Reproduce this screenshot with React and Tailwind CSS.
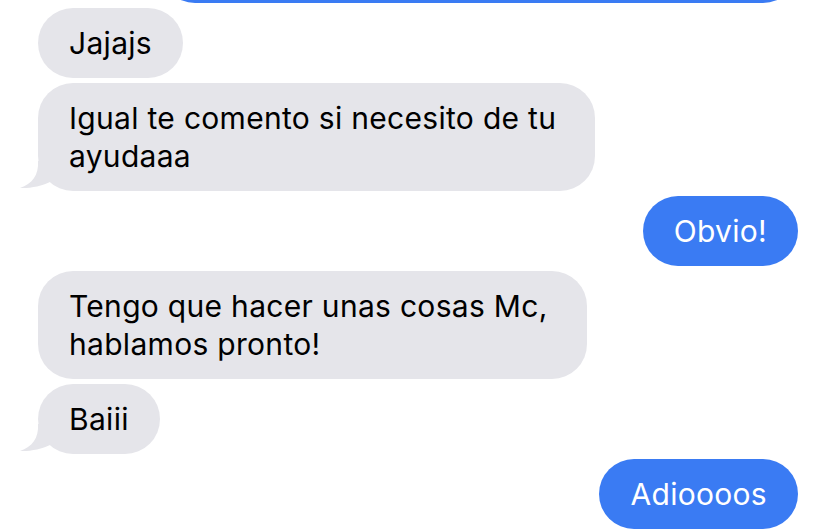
const messages = [
  { id: 1, from: "them", lines: ["Jajajs"] },
  { id: 2, from: "them", lines: ["Igual te comento si necesito de tu", "ayudaaa"], tail: true },
  { id: 3, from: "me", lines: ["Obvio!"] },
  { id: 4, from: "them", lines: ["Tengo que hacer unas cosas Mc,", "hablamos pronto!"] },
  { id: 5, from: "them", lines: ["Baiii"], tail: true },
  { id: 6, from: "me", lines: ["Adioooos"] },
];

function Tail() {
  return (
    <svg className="absolute left-[-20px] bottom-0" width="40" height="30" viewBox="0 0 40 30">
      <path d="M20 0 C21 14 14 23 2 27 C12 27.5 24 25 32 21 L32 0 Z" fill="#e5e5ea" />
    </svg>
  );
}

function Bubble({ msg }) {
  const mine = msg.from === "me";
  const multi = msg.lines.length > 1;
  return (
    <div className={mine ? "flex justify-end" : "flex justify-start"}>
      <div
        className={
          "relative rounded-[35px] pl-[31px] py-4 text-[30px] leading-[38px] tracking-[0.3px] whitespace-nowrap " +
          (multi ? "pr-[39px] " : "pr-[31px] ") +
          (mine ? "bg-[#3a7bf3] text-white" : "bg-[#e5e5ea] text-black")
        }
      >
        {msg.tail && <Tail />}
        <span className="relative">
          {msg.lines.map((l, i) => (
            <div key={i}>{l}</div>
          ))}
        </span>
      </div>
    </div>
  );
}

export default function App() {
  return (
    <div className="w-[828px] h-[530px] overflow-hidden bg-white" style={{ fontFamily: "Inter, 'Liberation Sans', sans-serif" }}>
      <div className="flex flex-col gap-[5px] pl-[38px] pr-[30px]">
        {/* previous sent bubble, cut off at the top */}
        <div className="flex justify-end -mt-[67px]">
          <div className="w-[638px] h-[70px] rounded-[35px] bg-[#3a7bf3]" />
        </div>
        {messages.map((m) => (
          <Bubble key={m.id} msg={m} />
        ))}
      </div>
    </div>
  );
}
